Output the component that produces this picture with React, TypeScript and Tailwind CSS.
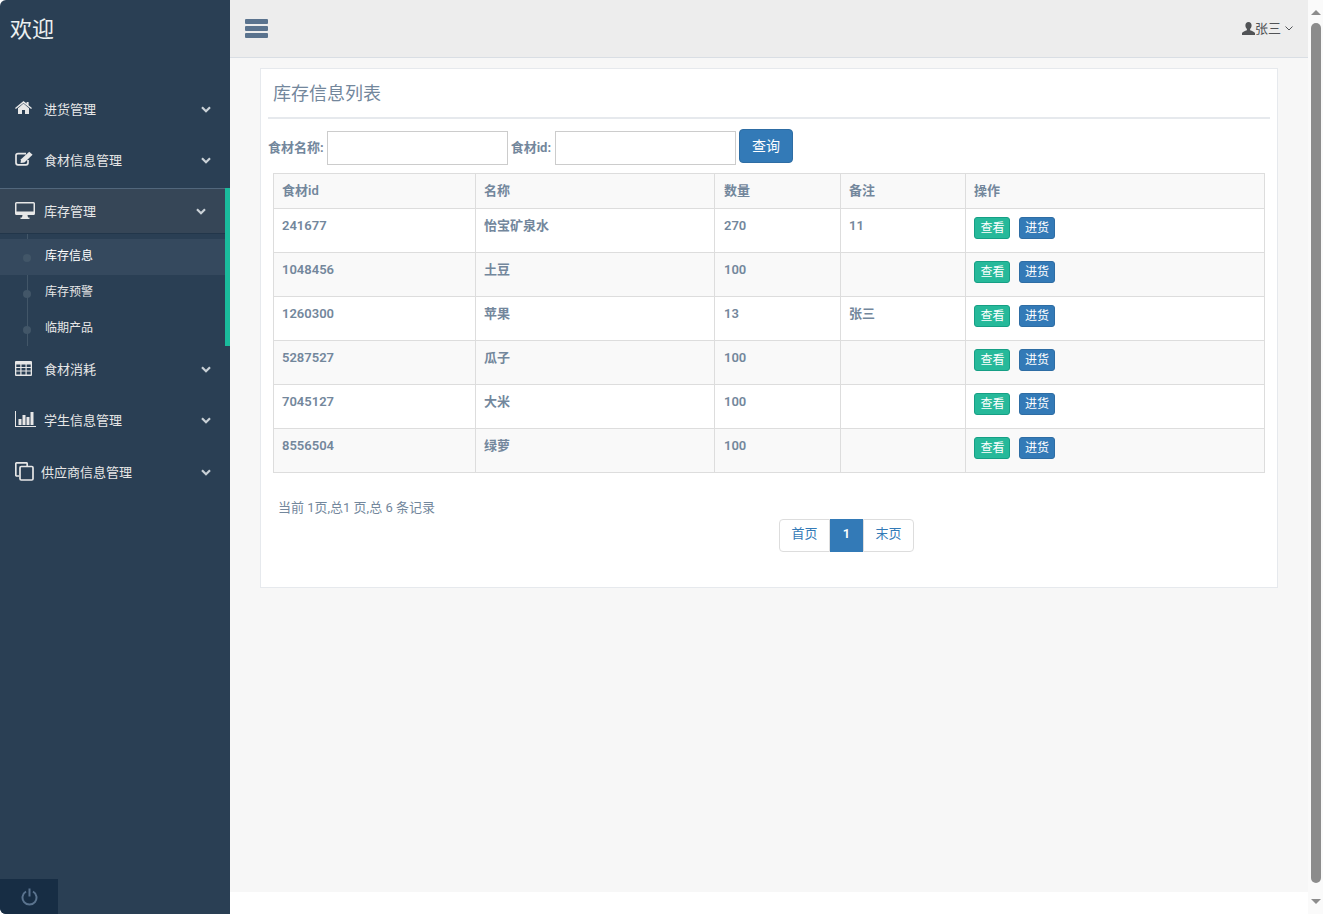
import React from 'react';

const Chevron = () => (
  <svg width="10" height="7" viewBox="0 0 10 7" fill="none" stroke="currentColor" strokeWidth="2.2" className="shrink-0 text-[#C9D0D6]">
    <path d="M1 1.2 5 5.2 9 1.2" />
  </svg>
);

const HomeIcon = () => (
  <svg width="17" height="13" viewBox="0 0 17 13" fill="currentColor">
    <path d="M8.5 2.6 14 7.2V13h-4V9H7v4H3V7.2z" />
    <path d="M8.5 0 11.6 2.6V1h2v3.3L17 7l-.9 1L8.5 1.9.9 8 0 7z" />
  </svg>
);

const EditIcon = () => (
  <svg width="19" height="15" viewBox="0 0 19 15" fill="none">
    <path d="M13 9v2.8a2 2 0 0 1-2 2H3a2 2 0 0 1-2-2V4.6a2 2 0 0 1 2-2h8" stroke="currentColor" strokeWidth="1.7" />
    <path d="M6 8.2 14.2 0.8 17.6 3.8 9.4 11.6 5.6 12z" fill="currentColor" />
  </svg>
);

const DesktopIcon = () => (
  <svg width="20" height="17" viewBox="0 0 20 17" fill="currentColor">
    <path fillRule="evenodd" d="M1.5 0h17A1.5 1.5 0 0 1 20 1.500v10a1.500 1.500 0 0 1-1.500 1.500h-17A1.500 1.500 0 0 1 0 11.500v-10A1.500 1.500 0 0 1 1.500 0zM1.500 1.500v8h17v-8z" />
    <path d="M7.500 13h5l.5 2.500h1.500V17h-9v-1.500H7z" />
  </svg>
);

const TableIcon = () => (
  <svg width="17" height="15" viewBox="0 0 17 15" fill="currentColor">
    <path fillRule="evenodd" d="M1 0h15a1 1 0 0 1 1 1v13a1 1 0 0 1-1 1H1a1 1 0 0 1-1-1V1a1 1 0 0 1 1-1zM1.300 3.500v2.500h4v-2.500zM6.500 3.500v2.500h4v-2.500zM11.700 3.500v2.500h4v-2.500zM1.300 7v2.500h4V7zM6.500 7v2.500h4V7zM11.700 7v2.500h4V7zM1.300 10.500v3h4v-3zM6.500 10.500v3h4v-3zM11.700 10.500v3h4v-3z" />
  </svg>
);

const BarsIcon = () => (
  <svg width="21" height="16" viewBox="0 0 21 16" fill="currentColor">
    <path d="M0 0h1v15h20v1H0z" />
    <rect x="3.500" y="8" width="3" height="6" />
    <rect x="7.500" y="4" width="3" height="10" />
    <rect x="11.500" y="6" width="3" height="8" />
    <rect x="15.500" y="1" width="3" height="13" />
  </svg>
);

const CopyIcon = () => (
  <svg width="19" height="19" viewBox="0 0 19 19" fill="none" stroke="currentColor" strokeWidth="1.700">
    <path d="M4 14H1.800a1 1 0 0 1-1-1V1.800a1 1 0 0 1 1-1h9.400a1 1 0 0 1 1 1V4" />
    <rect x="5" y="4.500" width="13" height="13.500" rx="1.200" />
  </svg>
);

const PowerIcon = () => (
  <svg width="17" height="18" viewBox="0 0 17 18" fill="none" stroke="currentColor" strokeWidth="2">
    <path d="M5 3.500a7 7 0 1 0 7 0" />
    <path d="M8.500 0.500v8" />
  </svg>
);

const BarsMenuIcon = () => (
  <svg width="23" height="19" viewBox="0 0 23 19" fill="currentColor" className="text-[#5A738E]">
    <rect width="23" height="5" rx="1" />
    <rect y="7" width="23" height="5" rx="1" />
    <rect y="14" width="23" height="5" rx="1" />
  </svg>
);

const UserIcon = () => (
  <svg width="13" height="13" viewBox="0 0 13 13" fill="currentColor">
    <path d="M6.500 0C8.400 0 9.600 1.400 9.600 3.400c0 1.500-.7 2.800-1.500 3.500v1.300c1.800.7 4.400 1.500 4.900 2.800V13H0v-2c.5-1.300 3.100-2.100 4.900-2.800V6.900C4.100 6.200 3.400 4.900 3.400 3.400 3.400 1.400 4.600 0 6.500 0z" />
  </svg>
);

const menuTop = [
  { label: '进货管理', icon: <HomeIcon />, cls: 'h-[51px]' },
  { label: '食材信息管理', icon: <EditIcon />, cls: 'h-[51px]' },
];

const menuBottom = [
  { label: '食材消耗', icon: <TableIcon />, cls: 'h-[47px]', gap: 'ml-[12px]' },
  { label: '学生信息管理', icon: <BarsIcon />, cls: 'h-[53px] pt-[2px]', gap: 'ml-[8px]' },
  { label: '供应商信息管理', icon: <CopyIcon />, cls: 'h-[51px] pt-[2px]', gap: 'ml-[7px]' },
];

const rows = [
  { id: '241677', name: '怡宝矿泉水', qty: '270', note: '11' },
  { id: '1048456', name: '土豆', qty: '100', note: '' },
  { id: '1260300', name: '苹果', qty: '13', note: '张三' },
  { id: '5287527', name: '瓜子', qty: '100', note: '' },
  { id: '7045127', name: '大米', qty: '100', note: '' },
  { id: '8556504', name: '绿萝', qty: '100', note: '' },
];

const subItems = ['库存信息', '库存预警', '临期产品'];

const App: React.FC = () => {
  return (
    <div className="w-[1323px] h-[914px] flex overflow-hidden bg-white text-[13px] text-[#73879C] font-['Roboto','Noto_Sans_CJK_SC',sans-serif] rounded-l-[6px]">
      {/* sidebar */}
      <aside className="w-[230px] h-full bg-[#2A3F54] flex flex-col shrink-0 text-[#E7E7E7]">
        <div className="h-[84px] shrink-0 pl-[10px] pt-[14px] text-[22px] leading-[32px] text-[#ECF0F1]">欢迎</div>
        {menuTop.map((m) => (
          <div key={m.label} className={`${m.cls} flex items-center pl-[15px] pr-[19px] shrink-0`}>
            <span className="w-[29px] -mt-[4px]">{m.icon}</span>
            <span className="flex-1">{m.label}</span>
            <Chevron />
          </div>
        ))}
        <div className="mt-[2px] border-r-[5px] border-[#1ABB9C] shrink-0">
          <div className="h-[46px] flex items-center pl-[15px] pr-[19px] pt-[1px] bg-[#364657] border-t border-[#52677c] border-b border-b-[#22364a]">
            <span className="w-[29px] -mt-[3px]"><DesktopIcon /></span>
            <span className="flex-1">库存管理</span>
            <Chevron />
          </div>
          <div className="relative pt-[5px] h-[112px] text-[12px]">
            <span className="absolute left-[27px] top-0 bottom-0 w-px bg-[#425668]" />
            {subItems.map((s, i) => (
              <div
                key={s}
                className={
                  i === 0
                    ? 'relative h-[36px] pl-[45px] pb-[2px] flex items-center bg-[#35495E] text-white'
                    : 'relative h-[36px] pl-[45px] pb-[2px] flex items-center'
                }
              >
                <span className="absolute left-[23px] top-[15px] w-[8px] h-[8px] rounded-full bg-[#425668]" />
                {s}
              </div>
            ))}
          </div>
        </div>
        {menuBottom.map((m) => (
          <div key={m.label} className={`${m.cls} flex items-center pl-[15px] pr-[19px] shrink-0`}>
            <span className="-mt-[3px]">{m.icon}</span>
            <span className={`flex-1 ${m.gap}`}>{m.label}</span>
            <Chevron />
          </div>
        ))}
        <div className="mt-auto h-[35px] w-[58px] bg-[#172D44] flex items-center justify-center text-[#5A738E]">
          <PowerIcon />
        </div>
      </aside>

      {/* main */}
      <div className="w-[1078px] h-full flex flex-col shrink-0">
        <header className="h-[58px] shrink-0 bg-[#EDEDED] border-b border-[#D9DEE4] flex items-center justify-between pl-[15px] pr-[15px]">
          <BarsMenuIcon />
          <div className="flex items-center text-[#515356]">
            <UserIcon />
            <span>张三</span>
            <svg width="8" height="5" viewBox="0 0 8 5" fill="none" stroke="currentColor" strokeWidth="1" className="ml-[4px]"><path d="M.500.500 4 4 7.500.500" /></svg>
          </div>
        </header>
        <main className="h-[834px] shrink-0 bg-[#F7F7F7] pl-[30px] pr-[30px] pt-[10px]">
          <section className="h-[520px] bg-white border border-[#E6E9ED] px-[7px] pt-[10px]">
            <div className="h-[40px] border-b-2 border-[#E6E9ED] pl-[5px] text-[18px] leading-[30px]">库存信息列表</div>
            <form className="flex items-start h-[54px] pt-[10px] font-bold">
              <label className="mt-[10px] leading-[18px] mr-[3px]">食材名称:</label>
              <input className="w-[181px] h-[34px] mt-[2px] border border-[#ccc] bg-white" />
              <label className="mt-[10px] leading-[18px] ml-[3px] mr-[4px]">食材id:</label>
              <input className="w-[181px] h-[34px] mt-[2px] border border-[#ccc] bg-white" />
              <button type="button" className="ml-[3px] w-[54px] h-[34px] rounded-[4px] bg-[#337AB7] border border-[#2E6DA4] text-white text-[14px] font-normal">查询</button>
            </form>
            <table className="ml-[5px] w-[992px] table-fixed border-collapse border border-[#DDDDDD] font-semibold">
              <colgroup>
                <col className="w-[202px]" />
                <col className="w-[239px]" />
                <col className="w-[126px]" />
                <col className="w-[125px]" />
                <col />
              </colgroup>
              <thead>
                <tr className="h-[35px] bg-[#F9F9F9]">
                  <th className="border border-[#DDDDDD] px-[8px] text-left font-semibold">食材id</th>
                  <th className="border border-[#DDDDDD] px-[8px] text-left font-semibold">名称</th>
                  <th className="border border-[#DDDDDD] pl-[9px] pr-[8px] text-left font-semibold">数量</th>
                  <th className="border border-[#DDDDDD] px-[8px] text-left font-semibold">备注</th>
                  <th className="border border-[#DDDDDD] px-[8px] text-left font-semibold">操作</th>
                </tr>
              </thead>
              <tbody>
                {rows.map((r, i) => (
                  <tr key={r.id} className={i % 2 === 1 ? 'h-[44px] bg-[#F9F9F9]' : 'h-[44px] bg-white'}>
                    <td className="border border-[#DDDDDD] px-[8px] pt-[7px] align-top">{r.id}</td>
                    <td className="border border-[#DDDDDD] px-[8px] pt-[7px] align-top">{r.name}</td>
                    <td className="border border-[#DDDDDD] pl-[9px] pr-[8px] pt-[7px] align-top">{r.qty}</td>
                    <td className="border border-[#DDDDDD] px-[8px] pt-[7px] align-top">{r.note}</td>
                    <td className="border border-[#DDDDDD] px-[8px] pt-[8px] align-top">
                      <div className="flex gap-[9px]">
                        <button type="button" className="w-[36px] h-[22px] pl-px rounded-[3px] bg-[#26B99A] border border-[#169F85] text-white text-[12px] font-normal">查看</button>
                        <button type="button" className="w-[36px] h-[22px] rounded-[3px] bg-[#337AB7] border border-[#2E6DA4] text-white text-[12px] font-normal">进货</button>
                      </div>
                    </td>
                  </tr>
                ))}
              </tbody>
            </table>
            <div className="pl-[10px] pt-[26px] leading-[18px]">当前 1页,总1 页,总 6 条记录</div>
            <div className="flex ml-[511px] mt-[2px] h-[33px] w-[135px] text-center">
              <span className="w-[51px] border border-[#DDDDDD] rounded-l-[4px] text-[#337AB7] bg-white leading-[27px]">首页</span>
              <span className="w-[33px] bg-[#337AB7] text-white font-semibold leading-[29px]">1</span>
              <span className="w-[51px] border border-[#DDDDDD] rounded-r-[4px] text-[#337AB7] bg-white leading-[27px]">末页</span>
            </div>
          </section>
        </main>
        <div className="flex-1 bg-white" />
      </div>

      {/* scrollbar */}
      <div className="w-[15px] h-full shrink-0 bg-[#FAFAFA] flex flex-col items-center text-[#8C8C8C]">
        <svg width="10" height="5" viewBox="0 0 10 5" className="mt-[10px] shrink-0" fill="currentColor"><path d="M5 0l5 5H0z" /></svg>
        <div className="w-[10px] h-[860px] mt-[8px] rounded-full bg-[#8C8C8C] shrink-0" />
        <svg width="10" height="5" viewBox="0 0 10 5" className="mt-[16px] shrink-0" fill="currentColor"><path d="M5 5l5-5H0z" /></svg>
      </div>
    </div>
  );
};

export default App;
